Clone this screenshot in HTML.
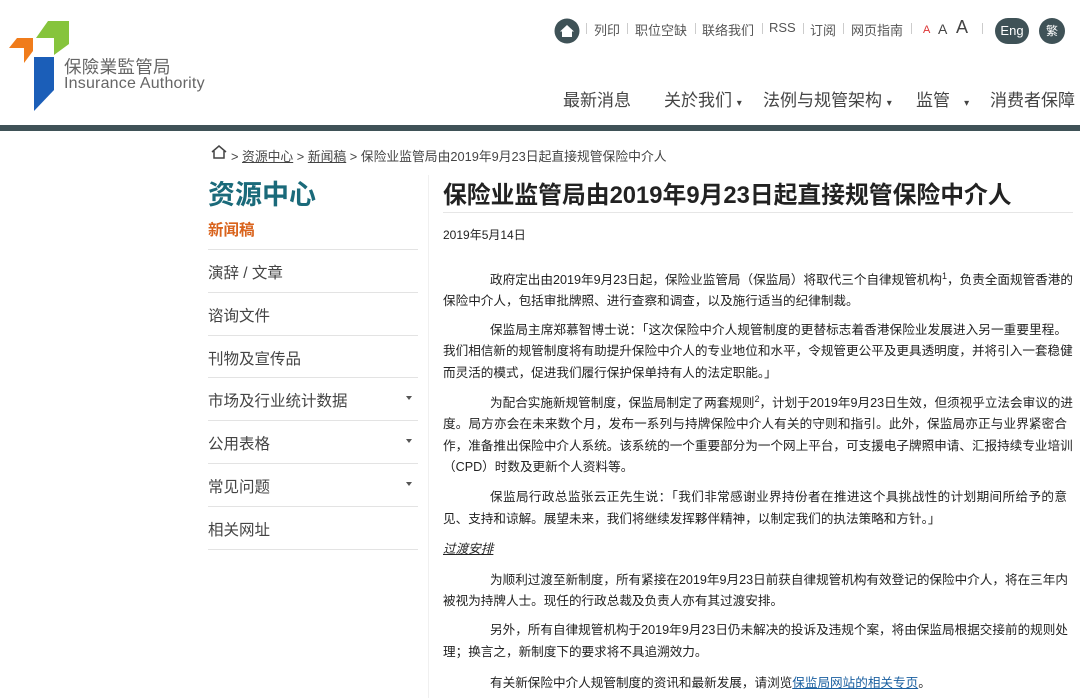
<!DOCTYPE html>
<html><head><meta charset="utf-8">
<style>
*{margin:0;padding:0;box-sizing:border-box}
body{width:1080px;height:698px;overflow:hidden;background:#fff;font-family:"Liberation Sans","Noto Sans CJK SC",sans-serif;color:#222;position:relative}
.abs{position:absolute;white-space:nowrap}
.top{font-size:13px;color:#555;top:20px}
.sep{position:absolute;top:23px;width:1px;height:11px;background:#ccc}
.nav{font-size:17px;color:#444;top:86px}
.bar{position:absolute;left:0;top:125px;width:1080px;height:6px;background:#3f5257}
.side{position:absolute;left:208px;width:210px;font-size:15.5px;color:#444}
.div{position:absolute;left:208px;width:210px;height:1px;background:#e3e3e3}
.tri{position:absolute;left:406px;width:0;height:0;border-left:3.5px solid transparent;border-right:3.5px solid transparent;border-top:4px solid #555}
.p{position:absolute;left:443px;font-size:12.6px;color:#222;white-space:nowrap}
.f{width:624px;text-align:justify;text-align-last:justify}
.i{padding-left:47px}
</style></head><body>
<svg class="abs" style="left:0;top:0" width="80" height="120">
<polygon points="48,21 69,21 69,44 54,55 54,38 36,38" fill="#86c43c"/>
<polygon points="17,38 33,38 33,51 24,63 24,48 9,48" fill="#f07c1b"/>
<polygon points="34,57 54,57 54,90 34,111" fill="#1b5eb8"/>
</svg>
<div class="abs" style="left:64px;top:54px;font-size:17.5px;color:#666;letter-spacing:0.3px">保險業監管局</div>
<div class="abs" style="left:64px;top:75px;font-size:16px;color:#666;letter-spacing:0.2px">Insurance Authority</div>

<svg class="abs" style="left:554px;top:18px" width="26" height="26"><circle cx="13" cy="13" r="12.5" fill="#3f5257"/><path d="M6 13.5 L13 7 L20 13.5 L18 13.5 L18 19 L8 19 L8 13.5Z" fill="#fff"/></svg>
<div class="sep" style="left:586px"></div>
<div class="abs top" style="left:594px">列印</div>
<div class="sep" style="left:627px"></div>
<div class="abs top" style="left:635px">职位空缺</div>
<div class="sep" style="left:695px"></div>
<div class="abs top" style="left:702px">联络我们</div>
<div class="sep" style="left:762px"></div>
<div class="abs top" style="left:769px">RSS</div>
<div class="sep" style="left:803px"></div>
<div class="abs top" style="left:810px">订阅</div>
<div class="sep" style="left:843px"></div>
<div class="abs top" style="left:851px">网页指南</div>
<div class="sep" style="left:911px"></div>
<div class="abs" style="left:923px;top:24px;font-size:11px;color:#d33">A</div>
<div class="abs" style="left:938px;top:21px;font-size:14px;color:#444">A</div>
<div class="abs" style="left:956px;top:17px;font-size:18px;color:#444">A</div>
<div class="sep" style="left:982px"></div>
<div class="abs" style="left:995px;top:18px;width:34px;height:26px;border-radius:13px;background:#3f5257;color:#fff;font-size:13px;text-align:center;line-height:26px">Eng</div>
<div class="abs" style="left:1039px;top:18px;width:26px;height:26px;border-radius:13px;background:#3f5257;color:#fff;font-size:12px;text-align:center;line-height:26px">繁</div>

<div class="abs nav" style="left:563px">最新消息</div>
<div class="abs nav" style="left:664px">关於我们 <span style="font-size:10px">▾</span></div>
<div class="abs nav" style="left:763px">法例与规管架构 <span style="font-size:10px">▾</span></div>
<div class="abs nav" style="left:916px">监管 &nbsp;&nbsp;<span style="font-size:10px">▾</span></div>
<div class="abs nav" style="left:990px">消费者保障</div>
<div class="bar"></div>

<svg class="abs" style="left:210px;top:144px" width="18" height="16"><path d="M2 8 L9 2 L16 8 M4 7 L4 14 L14 14 L14 7" fill="none" stroke="#444" stroke-width="1.5"/></svg>
<div class="abs" style="left:231px;top:146px;font-size:12.8px;color:#444">&gt; <u>资源中心</u> &gt; <u>新闻稿</u> &gt; 保险业监管局由2019年9月23日起直接规管保险中介人</div>

<div class="abs" style="left:208px;top:173px;font-size:27px;font-weight:bold;color:#1a6a7a">资源中心</div>
<div class="side" style="top:218px;color:#d9631c;font-weight:bold">新闻稿</div>
<div class="div" style="top:249px"></div>
<div class="side" style="top:261px">演辞 / 文章</div>
<div class="div" style="top:292px"></div>
<div class="side" style="top:304px">谘询文件</div>
<div class="div" style="top:335px"></div>
<div class="side" style="top:347px">刊物及宣传品</div>
<div class="div" style="top:377px"></div>
<div class="side" style="top:389px">市场及行业统计数据</div><div class="tri" style="top:396px"></div>
<div class="div" style="top:420px"></div>
<div class="side" style="top:432px">公用表格</div><div class="tri" style="top:439px"></div>
<div class="div" style="top:463px"></div>
<div class="side" style="top:475px">常见问题</div><div class="tri" style="top:482px"></div>
<div class="div" style="top:506px"></div>
<div class="side" style="top:518px">相关网址</div>
<div class="div" style="top:549px"></div>
<div class="abs" style="left:428px;top:175px;width:1px;height:523px;background:#f0f0f0"></div>

<div class="abs" style="left:443px;top:175px;font-size:23.8px;font-weight:bold;color:#222">保险业监管局由2019年9月23日起直接规管保险中介人</div>
<div class="abs" style="left:443px;top:212px;width:630px;height:1px;background:#e6e6e6"></div>
<div class="p" style="top:226px;font-size:12px">2019年5月14日</div>

<div class="p f i" style="top:269px">政府定出由2019年9月23日起，保险业监管局（保监局）将取代三个自律规管机构<sup style="font-size:9px">1</sup>，负责全面规管香港的</div>
<div class="p" style="top:290px">保险中介人，包括审批牌照、进行查察和调查，以及施行适当的纪律制裁。</div>
<div class="p f i" style="top:319px">保监局主席郑慕智博士说：「这次保险中介人规管制度的更替标志着香港保险业发展进入另一重要里程。</div>
<div class="p f" style="top:340px">我们相信新的规管制度将有助提升保险中介人的专业地位和水平，令规管更公平及更具透明度，并将引入一套稳健</div>
<div class="p" style="top:362px">而灵活的模式，促进我们履行保护保单持有人的法定职能。」</div>
<div class="p f i" style="top:392px">为配合实施新规管制度，保监局制定了两套规则<sup style="font-size:9px">2</sup>，计划于2019年9月23日生效，但须视乎立法会审议的进</div>
<div class="p f" style="top:413px">度。局方亦会在未来数个月，发布一系列与持牌保险中介人有关的守则和指引。此外，保监局亦正与业界紧密合</div>
<div class="p f" style="top:435px">作，准备推出保险中介人系统。该系统的一个重要部分为一个网上平台，可支援电子牌照申请、汇报持续专业培训</div>
<div class="p" style="top:456px">（CPD）时数及更新个人资料等。</div>
<div class="p f i" style="top:486px">保监局行政总监张云正先生说：「我们非常感谢业界持份者在推进这个具挑战性的计划期间所给予的意</div>
<div class="p" style="top:508px">见、支持和谅解。展望未来，我们将继续发挥夥伴精神，以制定我们的执法策略和方针。」</div>
<div class="p" style="top:538px;font-style:italic;text-decoration:underline">过渡安排</div>
<div class="p f i" style="top:569px">为顺利过渡至新制度，所有紧接在2019年9月23日前获自律规管机构有效登记的保险中介人，将在三年内</div>
<div class="p" style="top:590px">被视为持牌人士。现任的行政总裁及负责人亦有其过渡安排。</div>
<div class="p f i" style="top:619px">另外，所有自律规管机构于2019年9月23日仍未解决的投诉及违规个案，将由保监局根据交接前的规则处</div>
<div class="p" style="top:641px">理；换言之，新制度下的要求将不具追溯效力。</div>
<div class="p i" style="top:672px">有关新保险中介人规管制度的资讯和最新发展，请浏览<span style="color:#1a5fa0;text-decoration:underline">保监局网站的相关专页</span>。</div>
</body></html>
